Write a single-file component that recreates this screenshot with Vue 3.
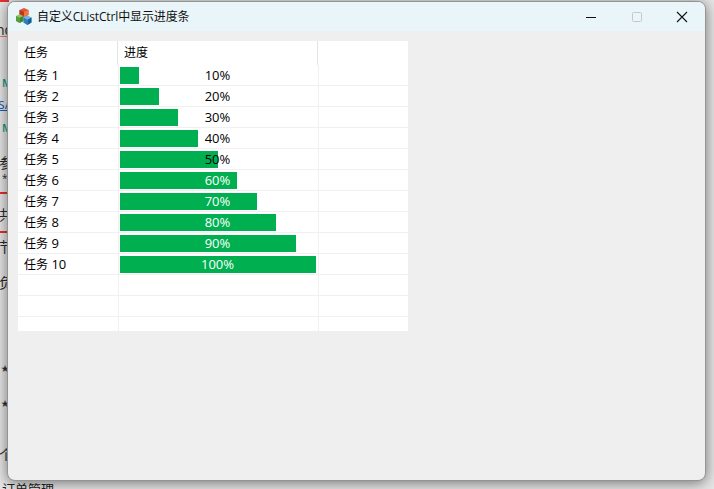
<script setup>
const rows = Array.from({ length: 10 }, (_, i) => {
  const pct = (i + 1) * 10
  return { id: i + 1, pct, width: Math.floor(pct * 1.96) }
})
const fragments = [
  { text: 'nd', x: -4, y: 22, cls: 'dark' },
  { text: 'M', x: 2, y: 75, cls: 'green' },
  { text: 's/', x: -2, y: 96, cls: 'link' },
  { text: 'M', x: 2, y: 120, cls: 'green' },
  { text: '参', x: -1, y: 155, cls: 'dark' },
  { text: '*', x: 2, y: 173, cls: 'dark tiny' },
  { text: '共', x: -1, y: 207, cls: 'dark' },
  { text: '节', x: -1, y: 239, cls: 'dark' },
  { text: '负', x: -1, y: 275, cls: 'dark' },
  { text: '★', x: 1, y: 360, cls: 'star' },
  { text: '★', x: 1, y: 395, cls: 'star' },
  { text: '个', x: -1, y: 447, cls: 'dark' },
  { text: '订单管理', x: 2, y: 481, cls: 'plain' }
]
</script>

<template>
  <div class="desktop">
    <span
      v-for="(f, i) in fragments"
      :key="i"
      class="frag"
      :class="f.cls"
      :style="{ left: f.x + 'px', top: f.y + 'px' }"
    >{{ f.text }}</span>
    <i class="redline r0"></i>
    <i class="redline r1"></i>
    <i class="redline r2"></i>
    <i class="redline r3"></i>

    <section class="window">
      <header class="titlebar">
        <svg class="appicon" width="16" height="17" viewBox="0 0 16 17">
          <path d="M3.500 2 8 0l4.500 2v5L8 9.500 3.500 7z" fill="#e0553a" />
          <path d="M3.500 2 8 4v5.500L3.500 7z" fill="#c23320" />
          <path d="M8 4l4.500-2v5L8 9.500z" fill="#e87a3c" />
          <path d="M0 8l3.500-1.800L7.500 8v5L3.500 15 0 13z" fill="#8cc863" />
          <path d="M0 8l3.700 1.800V15L0 13z" fill="#5a9e3c" />
          <path d="M3.700 9.800 7.500 8v5l-3.800 2z" fill="#3f8632" />
          <path d="M7.500 9.500 11.500 7.500l4 2v5l-4 2.500-4-2.500z" fill="#6db4e8" />
          <path d="M7.500 9.500l4 2.200V17l-4-2.500z" fill="#2f7fc0" />
          <path d="M11.500 11.700l4-2.200v5l-4 2.500z" fill="#1c5d96" />
        </svg>
        <span class="title">自定义CListCtrl中显示进度条</span>
        <div class="controls">
          <button class="ctl" aria-label="最小化">
            <svg width="12" height="12" viewBox="0 0 12 12"><path d="M1 6.500h10" stroke="#111" stroke-width="1" /></svg>
          </button>
          <button class="ctl" aria-label="最大化">
            <svg width="12" height="12" viewBox="0 0 12 12"><rect x="1.500" y="1.500" width="9" height="9" rx="1" fill="none" stroke="#c4c8ca" /></svg>
          </button>
          <button class="ctl" aria-label="关闭">
            <svg width="12" height="12" viewBox="0 0 12 12"><path d="M1 1l10 10M11 1 1 11" stroke="#111" stroke-width="1.100" /></svg>
          </button>
        </div>
      </header>

      <main class="client">
        <div class="list">
          <div class="head">
            <div class="hcell first"><span class="cjk">任务</span></div>
            <div class="hcell second"><span class="cjk">进度</span></div>
            <div class="hcell"></div>
          </div>
          <div v-for="r in rows" :key="r.id" class="row">
            <div class="cell name"><span class="cjk">任务</span> {{ r.id }}</div>
            <div class="cell prog">
              <div class="track">
                <div class="bar" :style="{ width: r.width + 'px' }"></div>
                <span class="pct" :class="{ light: r.pct > 50 }">{{ r.pct }}%</span>
              </div>
            </div>
            <div class="cell"></div>
          </div>
          <div v-for="n in 3" :key="'e' + n" class="row">
            <div class="cell"></div>
            <div class="cell"></div>
            <div class="cell"></div>
          </div>
        </div>
      </main>
    </section>
  </div>
</template>

<style>
html, body { margin: 0; padding: 0; background: #e6e6e6; }
</style>

<style scoped>
.desktop {
  position: relative;
  width: 714px;
  height: 489px;
  overflow: hidden;
  background: #e6e6e6;
  font-family: "Open Sans", "Noto Sans CJK SC", sans-serif;
}
.frag {
  position: absolute;
  font-size: 14px;
  line-height: 16px;
  white-space: nowrap;
}
.dark { color: #2a2a2a; }
.tiny { font-size: 10px; line-height: 10px; }
.plain { color: #222; font-size: 13px; }
.green { color: #0a9a80; font-size: 11px; font-weight: 600; }
.link { color: #1a5fb4; text-decoration: underline; }
.star { color: #333; font-size: 8px; }
.redline {
  position: absolute;
  left: 0;
  width: 9px;
  height: 2px;
  background: #e53030;
}
.r0 { top: 0; }
.r1 { top: 36px; height: 1px; background: #e77; }
.r2 { top: 192px; }
.r3 { top: 231px; }
.window {
  position: absolute;
  left: 7px;
  top: 1px;
  width: 699px;
  height: 480px;
  box-sizing: border-box;
  display: flex;
  flex-direction: column;
  background: #efefef;
  border: 1px solid #949494;
  border-radius: 8px;
  overflow: hidden;
  box-shadow: 0 2px 14px rgba(0, 0, 0, 0.5);
}
.titlebar {
  flex: 0 0 29px;
  display: flex;
  align-items: center;
  padding-left: 8px;
  background: #e9f5f8;
}
.appicon { flex: none; margin-right: 5px; }
.title {
  font-size: 12px;
  color: #111;
  line-height: 16px;
  letter-spacing: -0.12px;
}
.controls {
  margin-left: auto;
  display: flex;
}
.ctl {
  width: 45.5px;
  height: 29px;
  padding: 0;
  border: 0;
  background: none;
  display: flex;
  align-items: center;
  justify-content: center;
}
.client {
  flex: 1;
  padding: 10px 0 0 10px;
}
.list {
  width: 390px;
  height: 290px;
  overflow: hidden;
  background: #fff;
  font-size: 13px;
  color: #000;
}
.cjk { font-size: 12px; }
.head {
  display: grid;
  grid-template-columns: 100px 200px 90px;
  height: 24px;
}
.hcell {
  line-height: 23px;
  padding-left: 6px;
  box-sizing: border-box;
}
.hcell.first, .hcell.second { border-right: 1px solid #e4e4e4; }
.row {
  display: grid;
  grid-template-columns: 101px 200px 89px;
  height: 21px;
  box-sizing: border-box;
  border-bottom: 1px solid #f0f0f0;
}
.cell {
  box-sizing: border-box;
  border-right: 1px solid #f0f0f0;
  line-height: 20px;
}
.cell:last-child { border-right: 0; }
.name { padding-left: 6px; }
.prog { padding: 2px 0 0 1px; }
.track {
  position: relative;
  width: 196px;
  height: 17px;
}
.bar {
  height: 17px;
  background: #00b050;
}
.pct {
  position: absolute;
  inset: 0 1px 0 0;
  text-align: center;
  line-height: 17px;
}
.pct.light { color: #fff; }
</style>
